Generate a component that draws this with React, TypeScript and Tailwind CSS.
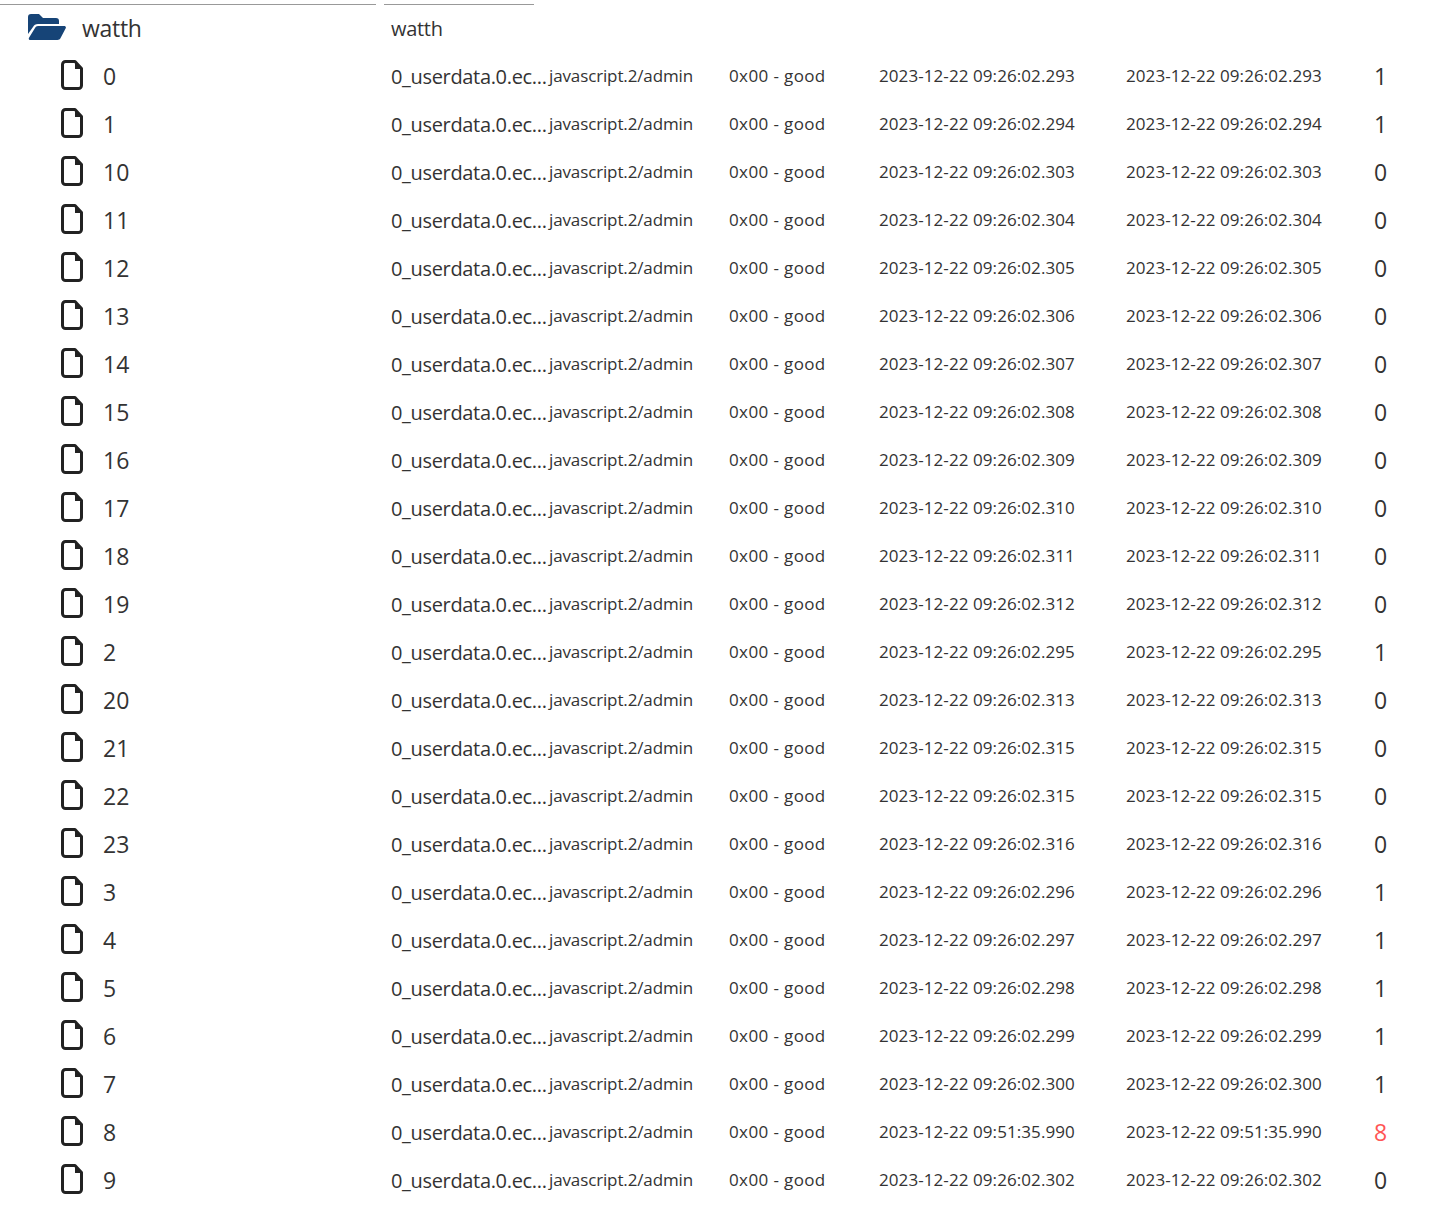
const F = "[font-family:'Open_Sans',sans-serif]";

const rows: [string, string, string][] = [
  ['0', '2023-12-22 09:26:02.293', '1'],
  ['1', '2023-12-22 09:26:02.294', '1'],
  ['10', '2023-12-22 09:26:02.303', '0'],
  ['11', '2023-12-22 09:26:02.304', '0'],
  ['12', '2023-12-22 09:26:02.305', '0'],
  ['13', '2023-12-22 09:26:02.306', '0'],
  ['14', '2023-12-22 09:26:02.307', '0'],
  ['15', '2023-12-22 09:26:02.308', '0'],
  ['16', '2023-12-22 09:26:02.309', '0'],
  ['17', '2023-12-22 09:26:02.310', '0'],
  ['18', '2023-12-22 09:26:02.311', '0'],
  ['19', '2023-12-22 09:26:02.312', '0'],
  ['2', '2023-12-22 09:26:02.295', '1'],
  ['20', '2023-12-22 09:26:02.313', '0'],
  ['21', '2023-12-22 09:26:02.315', '0'],
  ['22', '2023-12-22 09:26:02.315', '0'],
  ['23', '2023-12-22 09:26:02.316', '0'],
  ['3', '2023-12-22 09:26:02.296', '1'],
  ['4', '2023-12-22 09:26:02.297', '1'],
  ['5', '2023-12-22 09:26:02.298', '1'],
  ['6', '2023-12-22 09:26:02.299', '1'],
  ['7', '2023-12-22 09:26:02.300', '1'],
  ['8', '2023-12-22 09:51:35.990', '8'],
  ['9', '2023-12-22 09:26:02.302', '0'],
];

const FolderIcon = () => (
  <svg width="38" height="26" viewBox="0 0 38 26" className="shrink-0">
    <path d="M0 3a3 3 0 0 1 3-3h8l4 4h13a3 3 0 0 1 3 3v3H10c-2.500 0-4 1-5 3L0 20z" fill="#164477" />
    <path d="M10 12h26c1.500 0 2.300 1 1.700 2.300l-5 9.500c-.6 1.400-1.800 2.200-3.300 2.200H2.500C1 26 .4 25 1 23.700l6-9.700c.6-1.300 1.600-2 3-2z" fill="#164477" />
  </svg>
);

const FileIcon = () => (
  <svg width="22" height="30" viewBox="0 0 22 30" className="shrink-0">
    <path d="M4.500 1.500h9.500l6.500 7v17a3 3 0 0 1-3 3h-13a3 3 0 0 1-3-3v-21a3 3 0 0 1 3-3z" fill="none" stroke="#222" strokeWidth="3" strokeLinejoin="round" />
    <path d="M14 2v7h6.500z" fill="#222" />
  </svg>
);

export default function App() {
  return (
    <div className={`min-h-[1207px] bg-white text-[#333] ${F}`}>
      <div className="grid grid-cols-[376px_150px] gap-x-2 pt-1">
        <div className="border-t border-[#999]" />
        <div className="border-t border-[#999]" />
      </div>
      <div className="flex h-12 items-center">
        <div className="flex w-[384px] items-center pl-7">
          <div className="mb-1 flex">
            <FolderIcon />
          </div>
          <span className="ml-4 pb-0.5 text-[23px] tracking-[-0.3px]">watth</span>
        </div>
        <span className="pl-[7px] text-[20px] tracking-[-0.3px]">watth</span>
      </div>
      {rows.map(([name, date, value]) => (
        <div key={name} className="grid h-12 grid-cols-[384px_158px_180px_150px_247px_247px_1fr] items-center whitespace-nowrap">
          <div className="flex items-center pl-[61px]">
            <div className="mb-1 flex">
              <FileIcon />
            </div>
            <span className="ml-5 pb-0.5 text-[23px]">{name}</span>
          </div>
          <div className="pl-[7px] text-[20px] tracking-[-0.33px]">0_userdata.0.ec...</div>
          <div className="pb-0.5 pl-[7px] text-[17px] tracking-[-0.13px]">javascript.2/admin</div>
          <div className="pb-0.5 pl-[7px] text-[17px] tracking-[0.38px]">0x00 - good</div>
          <div className="pb-0.5 pl-[7px] text-[17px] tracking-[0.08px]">{date}</div>
          <div className="pb-0.5 pl-[7px] text-[17px] tracking-[0.08px]">{date}</div>
          <div className={`pb-0.5 pl-2 text-[23px] ${value === '8' ? 'text-[#f55]' : ''}`}>{value}</div>
        </div>
      ))}
    </div>
  );
}
